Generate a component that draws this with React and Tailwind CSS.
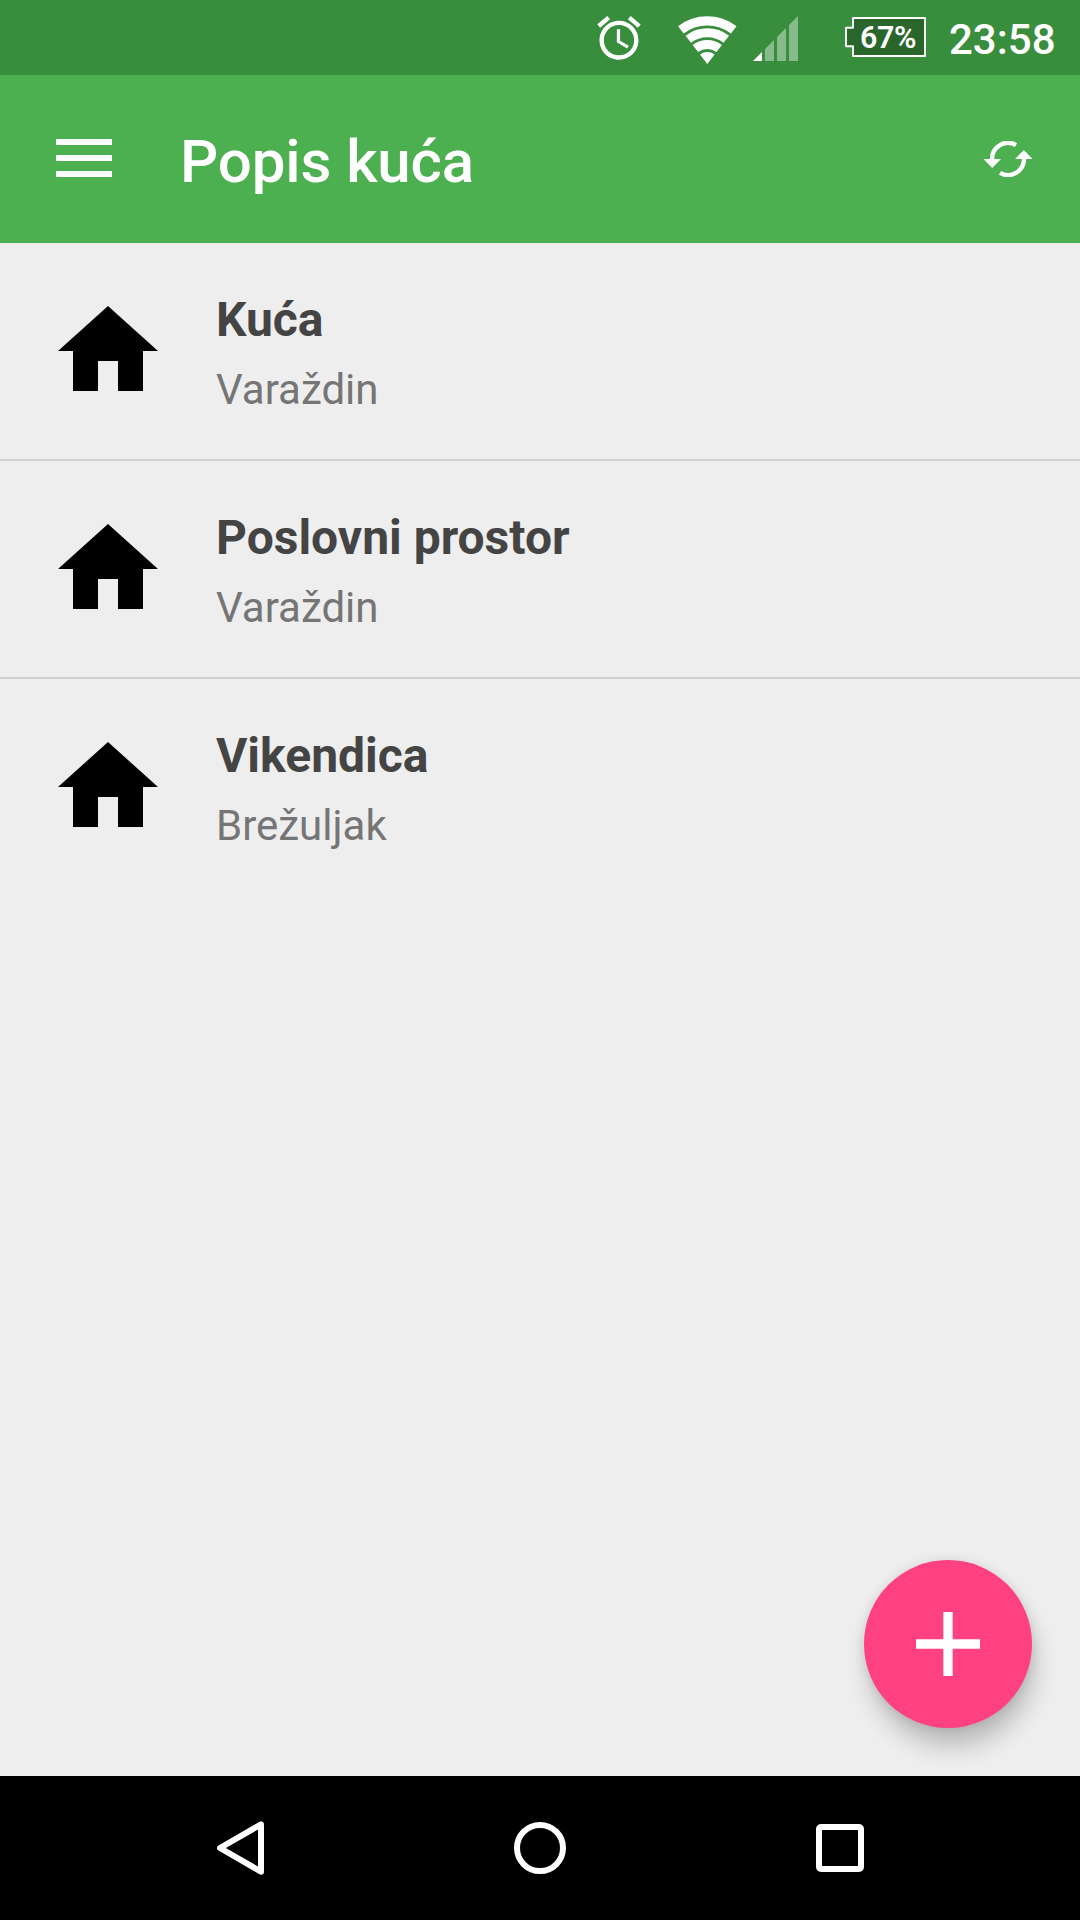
const houses = [
  { name: 'Kuća', place: 'Varaždin' },
  { name: 'Poslovni prostor', place: 'Varaždin' },
  { name: 'Vikendica', place: 'Brežuljak' },
];

function AlarmIcon() {
  return (
    <svg className="mt-3 h-[52px] w-[52px] shrink-0" viewBox="0 0 24 24" fill="white">
      <path d="M22 5.72l-4.6-3.86-1.29 1.53 4.6 3.86L22 5.72zM7.88 3.39L6.6 1.86 2 5.71l1.29 1.53 4.59-3.85zM12.5 8H11v6l4.75 2.85.75-1.23-4-2.37V8zM12 4c-4.97 0-9 4.03-9 9s4.02 9 9 9a9 9 0 0 0 0-18zm0 16c-3.87 0-7-3.13-7-7s3.13-7 7-7 7 3.13 7 7-3.13 7-7 7z" />
    </svg>
  );
}

function WifiIcon() {
  return (
    <svg className="ml-[33px] mt-[15px] h-[50px] w-[60px] shrink-0" viewBox="0 0 60 50" fill="none" stroke="white">
      <path d="M2.9 14.9A43.3 43.3 0 0 1 55.7 14.9" strokeWidth="9.3" />
      <path d="M10.3 24.3A31.2 31.2 0 0 1 48.3 24.3" strokeWidth="9" />
      <path d="M17.4 33.5A19.5 19.5 0 0 1 41.2 33.5" strokeWidth="9" />
      <path d="M29.3 48.9L22 39.4A12 12 0 0 1 36.6 39.4Z" fill="white" stroke="none" />
    </svg>
  );
}

function SignalIcon() {
  return (
    <svg className="ml-[15px] mt-4 h-[45px] w-[45px] shrink-0" viewBox="0 0 45 45" fill="white">
      <path d="M0 45L9 36V45Z" />
      <path d="M12 33L21 24V45H12ZM24 21L33 12V45H24ZM36 9L45 0V45H36Z" opacity="0.4" />
    </svg>
  );
}

function Battery() {
  return (
    <div className="relative ml-[47px] mt-[17px] h-10 w-[81px] shrink-0">
      <svg className="absolute inset-0 h-full w-full" viewBox="0 0 81 40">
        <path
          d="M8 1H80V39H8V29.3H1V10.7H8Z"
          fill="#2a662c"
          stroke="white"
          strokeWidth="1.9"
          strokeLinejoin="round"
        />
      </svg>
      <span className="relative block w-[61px] origin-left translate-x-[15px] scale-x-[0.95] text-[32px] font-semibold leading-[41px] tracking-[-0.4px]">
        67%
      </span>
    </div>
  );
}

function HomeIcon() {
  return (
    <svg className="ml-[58px] mt-[63px] h-[86px] w-[100px] shrink-0" viewBox="0 0 100 86">
      <path d="M50 0L100 45H85V85H60V55H40V85H15V45H0Z" fill="black" />
    </svg>
  );
}

function RefreshIcon() {
  return (
    <svg className="mr-[47px] h-9 w-[50px]" viewBox="0 0 50 36" fill="none" stroke="white" strokeWidth="4.4">
      <path d="M9 18A16 16 0 0 1 33 4.1M41 18A16 16 0 0 1 17 31.9" />
      <path d="M0.4 18H18L9.2 27ZM49.6 18H32L40.8 9Z" fill="white" stroke="none" />
    </svg>
  );
}

function StatusBar() {
  return (
    <div className="flex h-[75px] shrink-0 items-start bg-[#388e3c] pl-[593px]">
      <AlarmIcon />
      <WifiIcon />
      <SignalIcon />
      <Battery />
      <span className="ml-[23px] mt-[15px] text-[42px] font-medium leading-[49px]">23:58</span>
    </div>
  );
}

function AppBar() {
  return (
    <header className="flex h-[168px] shrink-0 items-center bg-[#4caf50]">
      <button className="ml-14 flex w-14 flex-col gap-[10px] pb-[2px]" aria-label="Izbornik">
        <span className="h-[6px] w-full bg-white" />
        <span className="h-[6px] w-full bg-white" />
        <span className="h-[6px] w-full bg-white" />
      </button>
      <h1 className="ml-[68px] flex-1 pt-[5px] text-[60px] font-medium leading-[70px] tracking-[-0.1px]">Popis kuća</h1>
      <button aria-label="Osvježi">
        <RefreshIcon />
      </button>
    </header>
  );
}

function HouseRow({ name, place }) {
  return (
    <li className="flex h-[218px] items-start">
      <HomeIcon />
      <div className="ml-[58px] pt-12">
        <h2 className="text-[48px] font-bold leading-[57px] text-[#444444]">{name}</h2>
        <p className="mt-[17px] text-[42px] leading-[50px] text-[#757575]">{place}</p>
      </div>
    </li>
  );
}

function NavBar() {
  return (
    <nav className="grid h-36 shrink-0 grid-cols-3 place-items-center bg-black px-[90px]">
      <svg className="h-[60px] w-[60px]" viewBox="0 0 60 60" fill="none" stroke="white" strokeWidth="6" strokeLinejoin="round">
        <path d="M10 30L51 6.3V53.7Z" />
      </svg>
      <div className="h-[52px] w-[52px] rounded-full border-[6px] border-white" />
      <div className="h-12 w-12 rounded-[5px] border-[6px] border-white" />
    </nav>
  );
}

export default function App() {
  return (
    <div className="flex h-[1920px] w-[1080px] flex-col overflow-hidden bg-[#eeeeee] font-['Roboto',sans-serif] text-white">
      <StatusBar />
      <AppBar />
      <main className="relative flex-1">
        <ul className="divide-y-2 divide-[#d0d0d0]">
          {houses.map((house) => (
            <HouseRow key={house.name} name={house.name} place={house.place} />
          ))}
        </ul>
        <button
          className="absolute bottom-12 right-12 flex h-[168px] w-[168px] items-center justify-center rounded-full bg-[#ff4081] shadow-[4px_20px_24px_-2px_rgba(0,0,0,0.22),0_0_12px_rgba(0,0,0,0.1)]"
          aria-label="Dodaj"
        >
          <svg className="h-16 w-16" viewBox="0 0 64 64" stroke="white" strokeWidth="9.3">
            <path d="M0 32H64M32 0V64" />
          </svg>
        </button>
      </main>
      <NavBar />
    </div>
  );
}
